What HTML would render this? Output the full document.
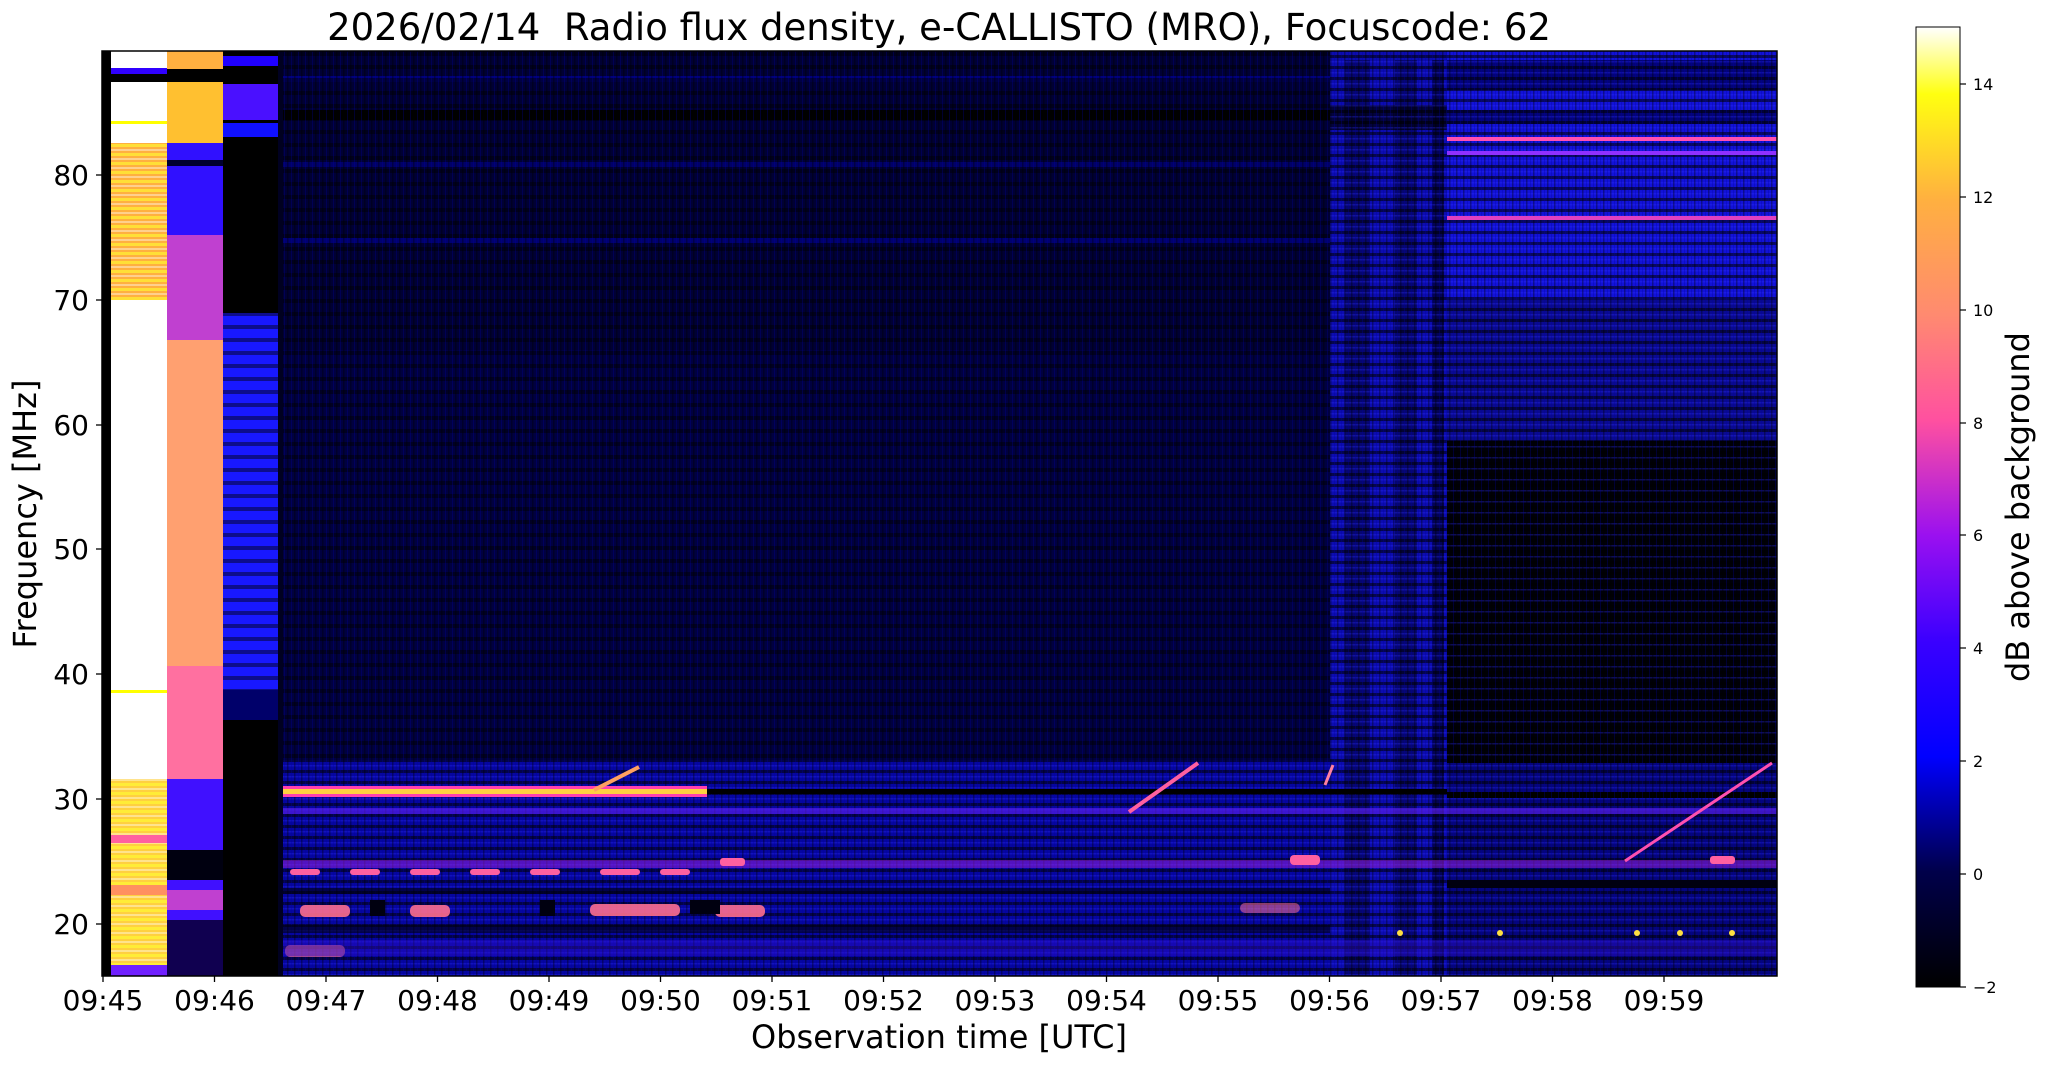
<!DOCTYPE html>
<html><head><meta charset="utf-8"><style>
html,body{margin:0;padding:0;background:#fff;width:2047px;height:1067px;overflow:hidden}
svg{display:block}
text{font-family:"DejaVu Sans","Liberation Sans",sans-serif;fill:#000}
</style></head><body>
<svg width="2047" height="1067" viewBox="0 0 2047 1067" xmlns="http://www.w3.org/2000/svg">
<defs>
<linearGradient id="cmap" x1="0" y1="1" x2="0" y2="0">
<stop offset="0" stop-color="#000000"/>
<stop offset="0.12" stop-color="#00004a"/>
<stop offset="0.24" stop-color="#0000ff"/>
<stop offset="0.36" stop-color="#3a00ff"/>
<stop offset="0.47" stop-color="#9a10f0"/>
<stop offset="0.59" stop-color="#ff50a0"/>
<stop offset="0.70" stop-color="#ff8a70"/>
<stop offset="0.82" stop-color="#ffb040"/>
<stop offset="0.93" stop-color="#ffff10"/>
<stop offset="1" stop-color="#ffffff"/>
</linearGradient>
<pattern id="hstripe" width="6" height="13" patternUnits="userSpaceOnUse">
<rect y="0" width="6" height="4" fill="#000" opacity="0.45"/>
</pattern>
<pattern id="hstripeB" width="6" height="11" patternUnits="userSpaceOnUse">
<rect y="0" width="6" height="3" fill="#000" opacity="0.55"/>
<rect y="6" width="6" height="1.5" fill="#3030ff" opacity="0.3"/>
</pattern>
<pattern id="vnoise" width="7" height="20" patternUnits="userSpaceOnUse">
<rect x="0" width="1.5" height="20" fill="#000" opacity="0.35"/>
<rect x="4" width="1" height="20" fill="#0000a0" opacity="0.3"/>
</pattern>
<pattern id="colA" width="56" height="9" patternUnits="userSpaceOnUse">
<rect width="56" height="3" fill="#ffff30" opacity="0.6"/>
<rect y="5" width="56" height="2" fill="#ffffff" opacity="0.4"/>
</pattern>
</defs>

<rect x="102" y="51" width="1675" height="925" fill="#000020"/>
<rect x="283" y="51" width="1047" height="300" fill="#000034"/>
<rect x="283" y="350" width="1047" height="410" fill="#000040"/>
<rect x="283" y="238" width="1047" height="5" fill="#000070"/>
<rect x="283" y="162" width="1047" height="5" fill="#000068"/>
<rect x="283" y="76" width="1047" height="6" fill="#00007a"/>
<rect x="283" y="110" width="1047" height="10" fill="#000000"/>
<!-- lower region -->
<rect x="283" y="760" width="1047" height="216" fill="#0606a0"/>
<!-- right region -->
<rect x="1447" y="51" width="330" height="390" fill="#1212d8"/>
<rect x="1447" y="60" width="330" height="30" fill="#000060" opacity="0.8"/>
<rect x="1447" y="110" width="330" height="14" fill="#000060" opacity="0.8"/>
<rect x="1447" y="300" width="330" height="141" fill="#0a0a90"/>
<rect x="1447" y="441" width="330" height="322" fill="#000008"/>
<rect x="1447" y="763" width="330" height="213" fill="#05057a"/>
<rect x="1447" y="792" width="330" height="6" fill="#000"/>
<!-- vertical bright band -->
<rect x="1330" y="51" width="117" height="925" fill="#0c0cb0"/>
<rect x="1345" y="60" width="25" height="916" fill="#000030" opacity="0.5"/>
<rect x="1395" y="60" width="22" height="916" fill="#000030" opacity="0.5"/>
<rect x="1432" y="60" width="12" height="916" fill="#000030" opacity="0.7"/>
<rect x="1330" y="105" width="117" height="25" fill="#000010" opacity="0.7"/>
<!-- textures -->
<rect x="283" y="51" width="1047" height="709" fill="url(#hstripe)"/>
<rect x="1330" y="51" width="447" height="925" fill="url(#hstripeB)"/>
<rect x="283" y="760" width="1047" height="216" fill="url(#hstripeB)"/>
<rect x="283" y="51" width="1494" height="925" fill="url(#vnoise)"/>
<!-- pink lines right -->
<rect x="1447" y="137" width="330" height="4" fill="#ff50b0"/>
<rect x="1447" y="151" width="330" height="4" fill="#9030ff"/>
<rect x="1447" y="216" width="330" height="4" fill="#e040c0"/>
<!-- 30.5MHz bright line -->
<rect x="283" y="786" width="424" height="11" fill="#ff40b0"/>
<rect x="283" y="789" width="424" height="5" fill="#ffd040"/>
<rect x="707" y="789" width="740" height="5" fill="#000"/>
<!-- lower bands -->
<rect x="283" y="808" width="1494" height="6" fill="#6020f0" opacity="0.6"/>
<rect x="283" y="860" width="1494" height="8" fill="#a020e0" opacity="0.5"/>
<g fill="#ff60a0">
<rect x="290" y="869" width="30" height="6" rx="3"/><rect x="350" y="869" width="30" height="6" rx="3"/>
<rect x="410" y="869" width="30" height="6" rx="3"/><rect x="470" y="869" width="30" height="6" rx="3"/>
<rect x="530" y="869" width="30" height="6" rx="3"/><rect x="600" y="869" width="40" height="6" rx="3"/>
<rect x="660" y="869" width="30" height="6" rx="3"/><rect x="720" y="858" width="25" height="8" rx="3"/>
<rect x="1290" y="855" width="30" height="10" rx="4"/><rect x="1710" y="856" width="25" height="8" rx="3"/>
</g>
<g fill="#ff7090" opacity="0.9">
<rect x="300" y="905" width="50" height="12" rx="5"/><rect x="410" y="905" width="40" height="12" rx="5"/>
<rect x="590" y="904" width="90" height="12" rx="5"/><rect x="715" y="905" width="50" height="12" rx="5"/>
<rect x="1240" y="903" width="60" height="10" rx="5" opacity="0.6"/>
<rect x="285" y="945" width="60" height="12" rx="5" opacity="0.7"/>
</g>
<rect x="283" y="940" width="1494" height="16" fill="#3010d0" opacity="0.4"/>
<g fill="#000010">
<rect x="370" y="900" width="15" height="16"/><rect x="540" y="900" width="15" height="16"/>
<rect x="690" y="900" width="30" height="14"/><rect x="1447" y="880" width="330" height="8"/>
<rect x="283" y="888" width="1047" height="6" opacity="0.6"/>
<rect x="283" y="925" width="1047" height="8" opacity="0.6"/>
</g>
<line x1="594" y1="790" x2="639" y2="767" stroke="#ffa060" stroke-width="4"/>
<line x1="1129" y1="812" x2="1198" y2="763" stroke="#ff60a0" stroke-width="4"/>
<line x1="1625" y1="861" x2="1772" y2="763" stroke="#ff50b0" stroke-width="3"/>
<line x1="1325" y1="785" x2="1333" y2="765" stroke="#ff80a0" stroke-width="3"/>
<g fill="#ffe040"><circle cx="1637" cy="933" r="3"/><circle cx="1680" cy="933" r="3"/><circle cx="1732" cy="933" r="3"/><circle cx="1400" cy="933" r="3"/><circle cx="1500" cy="933" r="3"/></g>

<!-- left columns -->
<rect x="102" y="51" width="9" height="925" fill="#000"/>
<rect x="111" y="51" width="56" height="925" fill="#ffffff"/>
<rect x="111" y="68" width="56" height="6" fill="#3000ff"/>
<rect x="111" y="74" width="56" height="8" fill="#000"/>
<rect x="111" y="121" width="56" height="3" fill="#ffff00"/>
<rect x="111" y="143" width="56" height="157" fill="#ffb040"/>
<rect x="111" y="143" width="56" height="157" fill="url(#colA)"/>
<rect x="111" y="690" width="56" height="3" fill="#ffff00"/>
<rect x="111" y="779" width="56" height="197" fill="#ffd040"/>
<rect x="111" y="779" width="56" height="197" fill="url(#colA)"/>
<rect x="111" y="835" width="56" height="8" fill="#ff60a0"/>
<rect x="111" y="885" width="56" height="10" fill="#ff9060"/>
<rect x="111" y="965" width="56" height="11" fill="#7020ff"/>
<rect x="167" y="51" width="56" height="925" fill="#ff9a70"/>
<rect x="167" y="51" width="56" height="18" fill="#ffb040"/>
<rect x="167" y="69" width="56" height="13" fill="#000"/>
<rect x="167" y="82" width="56" height="62" fill="#ffc030"/>
<rect x="167" y="143" width="56" height="92" fill="#3010ff"/>
<rect x="167" y="160" width="56" height="6" fill="#000030"/>
<rect x="167" y="235" width="56" height="105" fill="#c040d0"/>
<rect x="167" y="340" width="56" height="326" fill="#ffa070"/>
<rect x="167" y="666" width="56" height="113" fill="#ff70a0"/>
<rect x="167" y="779" width="56" height="197" fill="#4010ff"/>
<rect x="167" y="850" width="56" height="30" fill="#000010"/>
<rect x="167" y="890" width="56" height="20" fill="#c040d0"/>
<rect x="167" y="920" width="56" height="56" fill="#100050"/>
<rect x="223" y="51" width="55" height="925" fill="#000"/>
<rect x="223" y="56" width="55" height="10" fill="#2000ff"/>
<rect x="223" y="84" width="55" height="36" fill="#4a10ff"/>
<rect x="223" y="123" width="55" height="14" fill="#1010ff"/>
<rect x="223" y="313" width="55" height="380" fill="#1818ff"/>
<rect x="223" y="313" width="55" height="380" fill="url(#hstripe)"/>
<rect x="223" y="690" width="55" height="30" fill="#00006a"/>

<rect x="102" y="51" width="1675" height="925" fill="none" stroke="#000" stroke-width="1.5"/>

<text x="939" y="40" font-size="37" text-anchor="middle" xml:space="preserve">2026/02/14  Radio flux density, e-CALLISTO (MRO), Focuscode: 62</text>

<g stroke="#000" stroke-width="1.3">
<line x1="96" y1="924" x2="102" y2="924"/><line x1="96" y1="799" x2="102" y2="799"/>
<line x1="96" y1="674" x2="102" y2="674"/><line x1="96" y1="549" x2="102" y2="549"/>
<line x1="96" y1="425" x2="102" y2="425"/><line x1="96" y1="300" x2="102" y2="300"/>
<line x1="96" y1="175" x2="102" y2="175"/>
</g>
<g font-size="28" text-anchor="end">
<text x="89" y="934">20</text><text x="89" y="809">30</text><text x="89" y="684">40</text>
<text x="89" y="559">50</text><text x="89" y="435">60</text><text x="89" y="310">70</text>
<text x="89" y="185">80</text>
</g>
<text transform="translate(36,514) rotate(-90)" font-size="32" text-anchor="middle">Frequency [MHz]</text>

<g stroke="#000" stroke-width="1.3">
<line x1="103" y1="976" x2="103" y2="982"/><line x1="214.5" y1="976" x2="214.5" y2="982"/>
<line x1="326" y1="976" x2="326" y2="982"/><line x1="437.5" y1="976" x2="437.5" y2="982"/>
<line x1="549" y1="976" x2="549" y2="982"/><line x1="660.5" y1="976" x2="660.5" y2="982"/>
<line x1="772" y1="976" x2="772" y2="982"/><line x1="883.5" y1="976" x2="883.5" y2="982"/>
<line x1="995" y1="976" x2="995" y2="982"/><line x1="1106.5" y1="976" x2="1106.5" y2="982"/>
<line x1="1218" y1="976" x2="1218" y2="982"/><line x1="1329.5" y1="976" x2="1329.5" y2="982"/>
<line x1="1441" y1="976" x2="1441" y2="982"/><line x1="1552.5" y1="976" x2="1552.5" y2="982"/>
<line x1="1664" y1="976" x2="1664" y2="982"/>
</g>
<g font-size="28" text-anchor="middle">
<text x="103" y="1010">09:45</text><text x="214.5" y="1010">09:46</text><text x="326" y="1010">09:47</text>
<text x="437.5" y="1010">09:48</text><text x="549" y="1010">09:49</text><text x="660.5" y="1010">09:50</text>
<text x="772" y="1010">09:51</text><text x="883.5" y="1010">09:52</text><text x="995" y="1010">09:53</text>
<text x="1106.5" y="1010">09:54</text><text x="1218" y="1010">09:55</text><text x="1329.5" y="1010">09:56</text>
<text x="1441" y="1010">09:57</text><text x="1552.5" y="1010">09:58</text><text x="1664" y="1010">09:59</text>
</g>
<text x="939" y="1048" font-size="32" text-anchor="middle">Observation time [UTC]</text>

<rect x="1916" y="27" width="44" height="960" fill="url(#cmap)" stroke="#000" stroke-width="1"/>
<g stroke="#000" stroke-width="1.2">
<line x1="1960" y1="987" x2="1966" y2="987"/><line x1="1960" y1="874" x2="1966" y2="874"/>
<line x1="1960" y1="761" x2="1966" y2="761"/><line x1="1960" y1="648" x2="1966" y2="648"/>
<line x1="1960" y1="535" x2="1966" y2="535"/><line x1="1960" y1="423" x2="1966" y2="423"/>
<line x1="1960" y1="310" x2="1966" y2="310"/><line x1="1960" y1="197" x2="1966" y2="197"/>
<line x1="1960" y1="84" x2="1966" y2="84"/>
</g>
<g font-size="16">
<text x="1973" y="993">−2</text><text x="1973" y="880">0</text><text x="1973" y="767">2</text>
<text x="1973" y="654">4</text><text x="1973" y="541">6</text><text x="1973" y="429">8</text>
<text x="1973" y="316">10</text><text x="1973" y="203">12</text><text x="1973" y="90">14</text>
</g>
<text transform="translate(2029,507) rotate(-90)" font-size="32" text-anchor="middle">dB above background</text>
</svg>
</body></html>
